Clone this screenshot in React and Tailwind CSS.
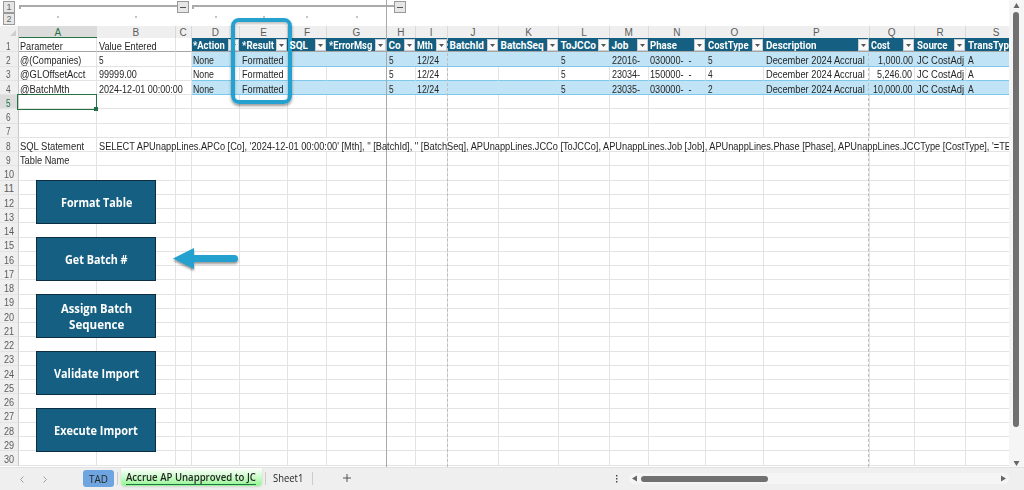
import { useLayoutEffect, useRef } from 'react';

const COLS = ['A', 'B', 'C', 'D', 'E', 'F', 'G', 'H', 'I', 'J', 'K', 'L', 'M', 'N', 'O', 'P', 'Q', 'R', 'S'];
const GRID =
  'grid w-[1009px] grid-cols-[78.5px_78.5px_16px_48.5px_48px_39px_60px_28.5px_32.5px_51px_60px_51px_38.5px_57.5px_58px_105.5px_45.5px_51px_61px]';

// cell text and its printed width in pixels
const HEAD = {
  A: ['Parameter', 43], B: ['Value Entered', 58], D: ['*Action', 32], E: ['*Result', 32], F: ['SQL', 18], G: ['*ErrorMsg', 43],
  H: ['Co', 12], I: ['Mth', 16], J: ['BatchId', 34], K: ['BatchSeq', 43], L: ['ToJCCo', 35], M: ['Job', 17], N: ['Phase', 27],
  O: ['CostType', 41], P: ['Description', 50], Q: ['Cost', 19], R: ['Source', 31], S: ['TransType', 46],
};
const line = (job, phase, type, cost, cw) => ({
  D: ['None', 21], E: ['Formatted', 42], H: ['5', 5], I: ['12/24', 22], L: ['5', 5], M: [job, 28], N: [phase, 42],
  O: [type, 5], P: ['December 2024 Accrual', 99], Q: [cost, cw], R: ['JC CostAdj', 47], S: ['A', 6],
});
const SQL =
  "SELECT APUnappLines.APCo [Co], '2024-12-01 00:00:00' [Mth], '' [BatchId], '' [BatchSeq], APUnappLines.JCCo [ToJCCo], APUnappLines.Job [Job], APUnappLines.Phase [Phase], APUnappLines.JCCType [CostType], '=TE";
const ROWS = {
  1: HEAD,
  2: { A: ['@(Companies)', 61], B: ['5', 5], ...line('22016-', '030000-  -', '5', '1,000.00', 35) },
  3: { A: ['@GLOffsetAcct', 65], B: ['99999.00', 38], ...line('23034-', '150000-  -', '4', '5,246.00', 35) },
  4: { A: ['@BatchMth', 49], B: ['2024-12-01 00:00:00', 84], ...line('23035-', '030000-  -', '2', '10,000.00', 40) },
  8: { A: ['SQL Statement', 64], B: [SQL, 912] },
  9: { A: ['Table Name', 49] },
};

// Condenses or widens a label so that it takes a given width.
function Fit({ w, children, className = '' }) {
  const ref = useRef(null);
  useLayoutEffect(() => {
    const el = ref.current;
    el.style.transform = `scaleX(${w / el.offsetWidth})`;
  }, [w, children]);
  return (
    <span className={`inline-block shrink-0 ${className}`} style={{ width: w }}>
      <span ref={ref} className="inline-block origin-left whitespace-pre">{children}</span>
    </span>
  );
}

function Cell({ row, col }) {
  const value = ROWS[row]?.[col];
  const inTable = row <= 4 && col >= 'D';
  const header = inTable && row === 1;
  const band = inTable && (row === 2 || row === 4);
  const noRight = (row === 8 && col !== 'A') || (row === 4 && col === 'B') || band || header;
  let tone = 'border-b-[#e3e3e3]';
  if (row === 1) tone = 'border-b-[#a6a6a6]';
  else if (inTable) tone = 'border-b-[#7cc9ec]';
  if (header) tone += ' bg-[#156082] text-white font-bold';
  if (band) tone += ' bg-[#c0e4f5]';
  return (
    <div className={`flex min-w-0 items-end overflow-visible border-b ${noRight ? '' : 'border-r border-r-[#e3e3e3]'} ${tone} ${col === 'Q' && row > 1 ? 'justify-end pr-[2px]' : 'pl-[1.5px]'}`}>
      {value && (
        <Fit w={value[1]} className={header ? 'relative z-10 h-[11px] font-[Roboto,sans-serif] text-[10px] leading-[12px]' : 'relative z-10 h-[10.5px] text-[10px] leading-[11.5px]'}>
          {value[0]}
        </Fit>
      )}
      {header && (
        <span className="ml-auto mr-px flex h-[12px] w-[11px] shrink-0 items-center justify-center border border-[#c9ced2] bg-[#fafafa]">
          <svg viewBox="0 0 6 4" className="h-[3px] w-[5px]" preserveAspectRatio="none"><path d="M0 0h6L3 4z" fill="#555" /></svg>
        </span>
      )}
    </div>
  );
}

function Outline({ className }) {
  return <div className={`h-1 border-l-2 border-t-2 border-[#aaa] ${className}`} />;
}

function Box({ children, className = 'h-[12px]' }) {
  return <div className={`flex w-[12px] items-center justify-center border border-[#999] bg-[#e6e6e6] text-[9px] leading-none text-[#666] ${className}`}>{children}</div>;
}

function Dots({ xs }) {
  return xs.map((x) => <i key={x} className="absolute top-[16px] h-[2px] w-[2px] bg-[#c4c4c4]" style={{ left: x }} />);
}

const BUTTONS = [
  [['Format Table', 71]], [['Get Batch #', 63]], [['Assign Batch', 71], ['Sequence', 55]], [['Validate Import', 85]], [['Execute Import', 84]],
];

export default function App() {
  return (
    <div className="relative flex h-[490px] w-[1024px] flex-col overflow-hidden bg-white font-['Liberation_Sans',Arial,sans-serif] text-[#262626]">
      <div className="flex h-[467px] shrink-0">
        <div className="flex w-[1008.5px] shrink-0 flex-col overflow-hidden">
          <div className="relative flex h-[26px] shrink-0">
            <div className="w-[19px] pl-[3px] pt-px">
              <Box>1</Box>
              <Box>2</Box>
            </div>
            <div className="flex items-start pt-[5px]">
              <Outline className="w-[158px]" />
              <Box className="-mt-[4px] h-[12px]"><i className="h-px w-[6px] bg-[#555]" /></Box>
              <Outline className="ml-[3px] w-[202px]" />
              <Box className="-mt-[4px] h-[12px]"><i className="h-px w-[6px] bg-[#555]" /></Box>
            </div>
            <Dots xs={[57, 135, 215, 263, 306, 356]} />
          </div>
          <div className="flex h-[12px] shrink-0 bg-[#efefef] text-[10px] leading-[13px] text-[#5c5c5c]">
            <div className="flex w-[18.5px] shrink-0 items-end justify-end border-r border-[#d0d0d0] pb-[2px] pr-[2px]">
              <svg viewBox="0 0 6 6" className="h-[6px] w-[6px]"><path d="M6 0v6H0z" fill="#cfcfcf" /></svg>
            </div>
            <div className={GRID}>
              {COLS.map((c) => (
                <div key={c} className={`h-[12px] text-center ${c === 'A' ? 'border-b border-[#217346] bg-[#dcdcdc] text-[#217346]' : 'border-r border-[#d9d9d9]'}`}>{c}</div>
              ))}
            </div>
          </div>
          {Array.from({ length: 30 }, (_, i) => i + 1).map((r) => (
            <div key={r} className="flex h-[14.26px] shrink-0">
              <div className={`flex w-[18.5px] shrink-0 items-end justify-center border-b border-r border-b-[#e3e3e3] border-r-[#c8c8c8] text-[10px] leading-[12px] ${r === 5 ? 'bg-[#dcdcdc] text-[#217346]' : 'bg-[#efefef] text-[#5c5c5c]'}`}>
                <Fit w={r < 10 ? 5 : 10} className="h-[10.5px]">{String(r)}</Fit>
              </div>
              <div className={GRID}>
                {COLS.map((c) => <Cell key={c} row={r} col={c} />)}
              </div>
            </div>
          ))}
        </div>
        <div className="flex w-[15.5px] flex-col items-center bg-[#f5f5f5] pb-px pt-[3px]">
          <svg viewBox="0 0 6 5" className="h-[5px] w-[7px]"><path d="M3 0L6 5H0z" fill="#666" /></svg>
          <div className="mt-[4px] h-[415px] w-[6px] rounded-full bg-[#707070]" />
          <svg viewBox="0 0 6 5" className="mt-auto h-[5px] w-[7px]"><path d="M0 0h6L3 5z" fill="#666" /></svg>
        </div>
      </div>

      <div className="flex h-[23px] shrink-0 border-t border-[#e2e2e2] bg-[#efefef] font-['Open_Sans',sans-serif] text-[11px] leading-[20px]">
        <div className="flex w-[82.5px] shrink-0 items-center gap-[19px] pl-[20px]">
          <svg viewBox="0 0 4 7" className="h-[7px] w-[4px]" fill="none" stroke="#a0a0a0"><path d="M3.5.5l-3 3 3 3" /></svg>
          <svg viewBox="0 0 4 7" className="h-[7px] w-[4px]" fill="none" stroke="#a0a0a0"><path d="M.5.5l3 3-3 3" /></svg>
        </div>
        <div className="mt-[2px] h-[17px] w-[31px] shrink-0 rounded-[3px] bg-[#6ea5e0] text-center leading-[18px]"><Fit w={19}>TAD</Fit></div>
        <div className="mx-[3px] mt-[4px] h-[13px] w-px bg-[#ccc]" />
        <div className="flex h-[18px] w-[141px] shrink-0 justify-center rounded-b-[4px] bg-linear-to-b from-white to-[#90f590] shadow-sm">
          <div className="h-[17px] border-b border-[#217346] font-semibold leading-[17px]"><Fit w={130}>Accrue AP Unapproved to JC</Fit></div>
        </div>
        <div className="ml-[3px] mt-[4px] h-[13px] w-px bg-[#ccc]" />
        <div className="w-[46px] shrink-0 pl-[7.5px]"><Fit w={30}>Sheet1</Fit></div>
        <div className="mt-[4px] h-[13px] w-px bg-[#ccc]" />
        <svg viewBox="0 0 8 8" className="ml-[30px] mt-[6px] h-[8px] w-[8px]" stroke="#555"><path d="M4 0v8M0 4h8" /></svg>
        <svg viewBox="0 0 2 8" className="ml-[265px] mt-[7px] h-[8px] w-[2px]" fill="#444"><path d="M0 0h1.4v1.4H0zM0 3h1.4v1.4H0zM0 6h1.4v1.4H0z" /></svg>
        <div className="ml-[11px] mt-[5px] flex h-[11px] w-[380px] items-center rounded-full bg-[#f5f5f5] px-[3px]">
          <svg viewBox="0 0 5 6" className="h-[7px] w-[5px]"><path d="M5 0v6L0 3z" fill="#666" /></svg>
          <div className="ml-[4px] h-[6px] w-[127px] rounded-full bg-[#707070]" />
          <svg viewBox="0 0 5 6" className="ml-auto h-[7px] w-[5px]"><path d="M0 0v6l5-3z" fill="#666" /></svg>
        </div>
      </div>

      <div className="absolute left-[386px] top-0 h-[467px] w-px bg-[#a8a8a8]" />
      <div className="absolute left-[447px] top-[38px] h-[429px] border-l border-dashed border-[#bdbdbd]" />
      <div className="absolute left-[868px] top-[38px] h-[429px] border-l border-dashed border-[#bdbdbd]" />
      <div className="absolute left-[17px] top-[94px] h-[16px] w-[80px] border border-[#217346]">
        <i className="absolute -bottom-[2px] -right-[2px] h-[4px] w-[4px] bg-[#217346]" />
      </div>
      <div className="absolute left-[231px] top-[18px] h-[86px] w-[61px] rounded-[8px] border-4 border-[#24a1cf] shadow-[0_2px_3px_rgba(0,0,0,.4),inset_0_2px_3px_rgba(0,0,0,.25)]" />
      <svg viewBox="0 0 66 26" className="absolute left-[173px] top-[247px] h-[26px] w-[66px] drop-shadow-[0_2px_1px_rgba(0,0,0,.4)]">
        <path d="M0 11.500L21 1v7h40.500a3.500 3.500 0 0 1 0 7H21v7z" fill="#24a1cf" />
      </svg>
      <div className="absolute left-[36px] top-[179.500px] flex flex-col gap-[13px]">
        {BUTTONS.map((lines, i) => (
          <button key={i} className="flex h-[44px] w-[120px] flex-col items-center justify-center border border-[#0b2e40] bg-[#156082] pt-[2px] font-['Open_Sans',sans-serif] text-[12px] font-bold leading-[16px] text-white">
            {lines.map(([t, w]) => <Fit key={t} w={w} className="text-left">{t}</Fit>)}
          </button>
        ))}
      </div>
    </div>
  );
}
